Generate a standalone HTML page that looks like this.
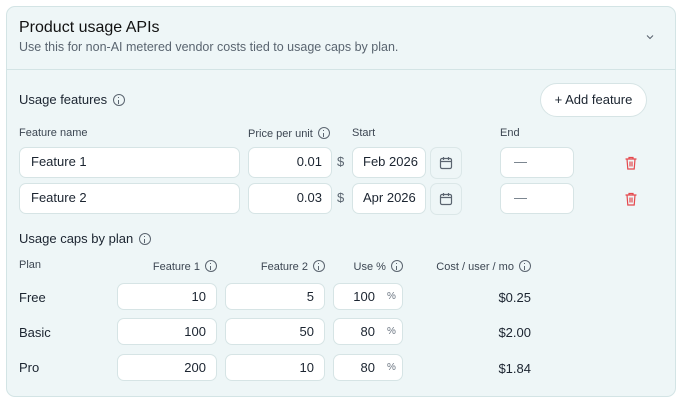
<!DOCTYPE html>
<html><head><meta charset="utf-8"><style>
*{box-sizing:border-box;margin:0;padding:0}
body{width:682px;height:401px;background:#fff;font-family:"Liberation Sans",sans-serif;color:#1b2430;position:relative;overflow:hidden}
.card{position:absolute;left:6px;top:6px;width:670px;height:391px;background:#eef6f7;border:1px solid #d3e4e5;border-radius:9px}
.a{position:absolute;white-space:nowrap}
.div{position:absolute;left:6px;width:670px;top:69px;height:1px;background:#d3e4e5}
.in{position:absolute;background:#fff;border:1px solid #d6e4e5;border-radius:7px;font-size:13px;line-height:28px;height:31px}
.in2{height:27px;line-height:25px}
.r{text-align:right}
.lbl{font-size:11px;color:#3c4652}
.i{display:inline-block;width:12px;height:12px;border:1.2px solid #5b6570;border-radius:50%;vertical-align:-2px;position:relative;margin-left:2px}
.i:before{content:"";position:absolute;left:4.3px;top:4.5px;width:1.2px;height:4px;background:#5b6570}
.i:after{content:"";position:absolute;left:4.3px;top:2px;width:1.2px;height:1.3px;background:#5b6570}
</style></head><body>
<div class="card"></div>
<div class="a" style="left:19px;top:19px;font-size:16px;font-weight:500;color:#111">Product usage APIs</div>
<div class="a" style="left:19px;top:40px;font-size:12.5px;color:#5a6570">Use this for non-AI metered vendor costs tied to usage caps by plan.</div>
<svg class="a" style="left:645px;top:33px" width="10" height="8" viewBox="0 0 10 8"><path d="M2 2.5l3 3 3-3" fill="none" stroke="#5b6570" stroke-width="1.1"/></svg>
<div class="div"></div>
<div class="a" style="left:19px;top:92px;font-size:13px">Usage features <span class="i"></span></div>
<div class="a" style="left:540px;top:83px;width:107px;height:34px;background:#fff;border:1px solid #d6e4e5;border-radius:17px;font-size:13px;text-align:center;line-height:32px">+ Add feature</div>
<div class="a lbl" style="left:19px;top:127px">Feature name</div>
<div class="a lbl" style="left:248px;top:127px">Price per unit <span class="i"></span></div>
<div class="a lbl" style="left:352px;top:127px">Start</div>
<div class="a lbl" style="left:500px;top:127px">End</div>

<div class="in" style="left:19px;top:147px;width:221px;padding-left:11px">Feature 1</div>
<div class="in r" style="left:248px;top:147px;width:84px;padding-right:9px">0.01</div>
<div class="a" style="left:337px;top:154px;font-size:13px;color:#5a6570">$</div>
<div class="in" style="left:352px;top:147px;width:74px;padding-left:10px">Feb 2026</div>
<div class="a" style="left:430px;top:147px;width:32px;height:32px;border:1px solid #dbe7e8;border-radius:7px"></div>
<div class="in" style="left:500px;top:147px;width:74px;padding-left:13px;color:#6a7480">—</div>

<div class="in" style="left:19px;top:183px;width:221px;padding-left:11px">Feature 2</div>
<div class="in r" style="left:248px;top:183px;width:84px;padding-right:9px">0.03</div>
<div class="a" style="left:337px;top:190px;font-size:13px;color:#5a6570">$</div>
<div class="in" style="left:352px;top:183px;width:74px;padding-left:10px">Apr 2026</div>
<div class="a" style="left:430px;top:183px;width:32px;height:32px;border:1px solid #dbe7e8;border-radius:7px"></div>
<div class="in" style="left:500px;top:183px;width:74px;padding-left:13px;color:#6a7480">—</div>

<svg class="a" style="left:439px;top:156px" width="14" height="14" viewBox="0 0 14 14"><rect x="1.5" y="2.5" width="11" height="10" rx="1.5" fill="none" stroke="#5b6570" stroke-width="1.2"/><path d="M1.5 5.5h11M4.5 1v3M9.5 1v3" stroke="#5b6570" stroke-width="1.2"/></svg>
<svg class="a" style="left:439px;top:192px" width="14" height="14" viewBox="0 0 14 14"><rect x="1.5" y="2.5" width="11" height="10" rx="1.5" fill="none" stroke="#5b6570" stroke-width="1.2"/><path d="M1.5 5.5h11M4.5 1v3M9.5 1v3" stroke="#5b6570" stroke-width="1.2"/></svg>
<svg class="a" style="left:624px;top:156px" width="14" height="14" viewBox="0 0 14 14"><path d="M1.5 3h11M5 3V1.5h4V3M3 3l.8 10h6.4L11 3M6 5.5v5M8 5.5v5" fill="none" stroke="#e5484d" stroke-width="1.2"/></svg>
<svg class="a" style="left:624px;top:192px" width="14" height="14" viewBox="0 0 14 14"><path d="M1.5 3h11M5 3V1.5h4V3M3 3l.8 10h6.4L11 3M6 5.5v5M8 5.5v5" fill="none" stroke="#e5484d" stroke-width="1.2"/></svg>

<div class="a" style="left:19px;top:231px;font-size:13px">Usage caps by plan <span class="i"></span></div>
<div class="a lbl" style="left:19px;top:259px">Plan</div>
<div class="a lbl r" style="left:117px;width:100px;top:260px">Feature 1 <span class="i"></span></div>
<div class="a lbl r" style="left:225px;width:100px;top:260px">Feature 2 <span class="i"></span></div>
<div class="a lbl r" style="left:300px;width:103px;top:260px">Use % <span class="i"></span></div>
<div class="a lbl r" style="left:400px;width:131px;top:260px">Cost / user / mo <span class="i"></span></div>

<div class="a" style="left:19px;top:290px;font-size:13px">Free</div>
<div class="a" style="left:19px;top:325px;font-size:13px">Basic</div>
<div class="a" style="left:19px;top:360px;font-size:13px">Pro</div>

<div class="in in2 r" style="left:117px;top:283px;width:100px;padding-right:10px">10</div>
<div class="in in2 r" style="left:225px;top:283px;width:100px;padding-right:10px">5</div>
<div class="in in2 r" style="left:333px;top:283px;width:70px;padding-right:27px">100</div>
<div class="in in2 r" style="left:117px;top:318px;width:100px;padding-right:10px">100</div>
<div class="in in2 r" style="left:225px;top:318px;width:100px;padding-right:10px">50</div>
<div class="in in2 r" style="left:333px;top:318px;width:70px;padding-right:27px">80</div>
<div class="in in2 r" style="left:117px;top:354px;width:100px;padding-right:10px">200</div>
<div class="in in2 r" style="left:225px;top:354px;width:100px;padding-right:10px">10</div>
<div class="in in2 r" style="left:333px;top:354px;width:70px;padding-right:27px">80</div>
<div class="a" style="left:387px;top:291px;font-size:10px;color:#6a7480">%</div>
<div class="a" style="left:387px;top:326px;font-size:10px;color:#6a7480">%</div>
<div class="a" style="left:387px;top:362px;font-size:10px;color:#6a7480">%</div>

<div class="a r" style="left:460px;width:71px;top:290px;font-size:13px">$0.25</div>
<div class="a r" style="left:460px;width:71px;top:325px;font-size:13px">$2.00</div>
<div class="a r" style="left:460px;width:71px;top:361px;font-size:13px">$1.84</div>
</body></html>
